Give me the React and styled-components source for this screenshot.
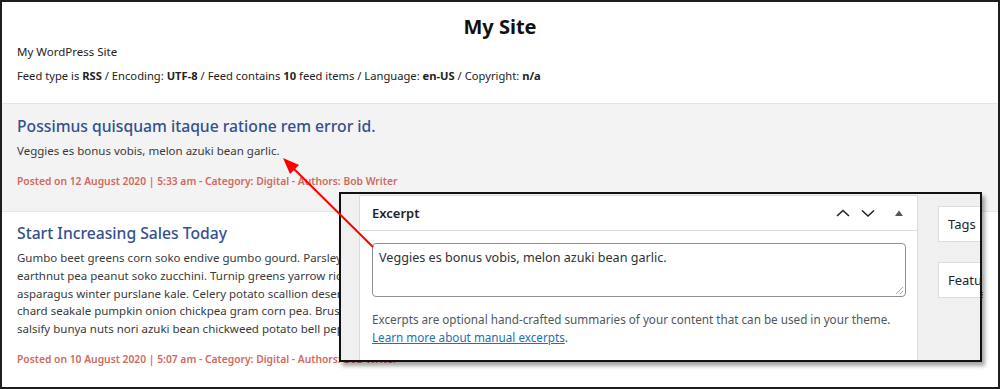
import React from "react";
import styled, { createGlobalStyle } from "styled-components";

const GlobalStyle = createGlobalStyle`
  body {
    margin: 0;
    font-family: "Noto Sans", "Open Sans", sans-serif;
    background: #fff;
  }
`;

const Frame = styled.div`
  position: relative;
  width: 1000px;
  height: 389px;
  box-sizing: border-box;
  border: 2px solid #1e1e1e;
  overflow: hidden;
  background: #fff;
`;

const Header = styled.header`
  height: 102px;
  box-sizing: border-box;
  padding: 11px 15px 0;
  border-bottom: 1px solid #e6e6e6;
`;

const SiteTitle = styled.h1`
  margin: 0;
  text-align: center;
  font-size: 20px;
  font-weight: 700;
  color: #111;
  line-height: 28px;
`;

const SiteTagline = styled.p`
  margin: 3px 0 0;
  font-size: 11.5px;
  color: #222;
`;

const FeedInfo = styled.p`
  margin: 9px 0 0;
  font-size: 11.2px;
  color: #222;
  white-space: nowrap;
  b {
    font-weight: 700;
  }
`;

const Item = styled.article`
  height: ${(p) => p.$h}px;
  box-sizing: border-box;
  padding: ${(p) => p.$top}px 15px 0;
  overflow: hidden;
  background: ${(p) => (p.$grey ? "#f3f3f3" : "#fff")};
  border-bottom: ${(p) => (p.$grey ? "1px solid #e6e6e6" : "none")};
`;

const ItemTitle = styled.h2`
  margin: 0;
  font-size: 15.7px;
  font-weight: 500;
  color: #35508f;
  line-height: 24px;
`;

const ItemText = styled.p`
  margin: 4px 0 0;
  font-size: 11.5px;
  line-height: 17.8px;
  color: #3a3a3a;
  white-space: nowrap;
  overflow: hidden;
`;

const Meta = styled.p`
  margin: ${(p) => p.$gap}px 0 0;
  font-size: 10.3px;
  font-weight: 600;
  color: #d06a5f;
  white-space: nowrap;
`;

const Inset = styled.div`
  position: absolute;
  left: 337px;
  top: 190px;
  width: 643px;
  height: 170px;
  box-sizing: border-box;
  border: 2px solid #111;
  background: #f0f0f1;
  box-shadow: 3px 4px 4px rgba(0, 0, 0, 0.35);
  display: flex;
  padding: 1px 0 0 18px;
  overflow: hidden;
`;

const MetaBox = styled.section`
  width: 559px;
  flex: none;
  box-sizing: border-box;
  background: #fff;
  border: 1px solid #dcdcde;
  border-bottom: none;
`;

const BoxHead = styled.div`
  height: 34px;
  display: flex;
  align-items: center;
  padding: 0 6px 0 12px;
  border-bottom: 1px solid #dcdcde;
`;

const BoxTitle = styled.h3`
  margin: 0;
  flex: 1;
  font-size: 13px;
  font-weight: 600;
  color: #1d2327;
`;

const IconBtn = styled.span`
  width: 25px;
  display: flex;
  justify-content: center;
  color: ${(p) => p.$color || "#1d2327"};
  margin-left: ${(p) => p.$gap || 0}px;
`;

const BoxBody = styled.div`
  padding: 12px 11px 0 12px;
`;

const ExcerptField = styled.div`
  height: 54px;
  box-sizing: border-box;
  border: 1px solid #8c8f94;
  border-radius: 4px;
  padding: 5px 6px;
  font-size: 12.6px;
  color: #2c3338;
  position: relative;
`;

const Grip = styled.span`
  position: absolute;
  right: 2px;
  bottom: 2px;
  width: 7px;
  height: 7px;
  background: linear-gradient(135deg, transparent 45%, #aaa 45%, #aaa 55%, transparent 55%, transparent 75%, #aaa 75%, #aaa 85%, transparent 85%);
`;

const Help = styled.p`
  margin: 13px 0 0;
  font-size: 11.7px;
  line-height: 18px;
  color: #50575e;
  white-space: nowrap;
  a {
    color: #2271b1;
    text-decoration: underline;
  }
`;

const SideCol = styled.div`
  display: flex;
  flex-direction: column;
  gap: 20px;
  margin-left: 20px;
  padding-top: 11px;
`;

const SideBox = styled.div`
  width: 80px;
  height: 36px;
  box-sizing: border-box;
  background: #fff;
  border: 1px solid #dcdcde;
  display: flex;
  align-items: center;
  padding-left: 9px;
  font-size: 13px;
  color: #1d2327;
  white-space: nowrap;
  overflow: hidden;
`;

const ArrowLayer = styled.svg`
  position: absolute;
  left: -2px;
  top: -2px;
  pointer-events: none;
`;

const Chevron = ({ up }) => (
  <svg width="16" height="16" viewBox="0 0 16 16">
    <path
      d={up ? "M2 11 L8 5.5 L14 11" : "M2 5.5 L8 11 L14 5.5"}
      fill="none"
      stroke="currentColor"
      strokeWidth="1.6"
    />
  </svg>
);

const gumbo = [
  "Gumbo beet greens corn soko endive gumbo gourd. Parsley shallot courgette tatsoi pea sprouts fava bean collard greens dandelion okra wakame tomato. Dandelion cucumber",
  "earthnut pea peanut soko zucchini. Turnip greens yarrow ricebean rutabaga endive cauliflower sea lettuce kohlrabi amaranth water spinach avocado daikon napa cabbage",
  "asparagus winter purslane kale. Celery potato scallion desert raisin horseradish spinach carrot soko. Lotus root water spinach fennel kombu maize bamboo shoot green bean swiss",
  "chard seakale pumpkin onion chickpea gram corn pea. Brussels sprout coriander water chestnut gourd swiss chard wakame kohlrabi beetroot carrot watercress. Corn amaranth",
  "salsify bunya nuts nori azuki bean chickweed potato bell pepper artichoke.",
];

export default function App() {
  return (
    <>
      <GlobalStyle />
      <Frame>
        <Header>
          <SiteTitle>My Site</SiteTitle>
          <SiteTagline>My WordPress Site</SiteTagline>
          <FeedInfo>
            Feed type is <b>RSS</b> / Encoding: <b>UTF-8</b> / Feed contains <b>10</b> feed items /
            Language: <b>en-US</b> / Copyright: <b>n/a</b>
          </FeedInfo>
        </Header>

        <Item $grey $h={108} $top={10}>
          <ItemTitle>Possimus quisquam itaque ratione rem error id.</ItemTitle>
          <ItemText>Veggies es bonus vobis, melon azuki bean garlic.</ItemText>
          <Meta $gap={14}>
            Posted on 12 August 2020 | 5:33 am - Category: Digital - Authors: Bob Writer
          </Meta>
        </Item>

        <Item $h={180} $top={9}>
          <ItemTitle>Start Increasing Sales Today</ItemTitle>
          <ItemText>
            {gumbo.map((line, i) => (
              <React.Fragment key={i}>
                {line}
                <br />
              </React.Fragment>
            ))}
          </ItemText>
          <Meta $gap={14}>
            Posted on 10 August 2020 | 5:07 am - Category: Digital - Authors: Bob Writer
          </Meta>
        </Item>

        <Inset>
          <MetaBox>
            <BoxHead>
              <BoxTitle>Excerpt</BoxTitle>
              <IconBtn>
                <Chevron up />
              </IconBtn>
              <IconBtn>
                <Chevron />
              </IconBtn>
              <IconBtn $gap={6} $color="#50575e">
                <svg width="10" height="8" viewBox="0 0 10 8">
                  <path d="M1 7 L5 1.5 L9 7 Z" fill="currentColor" />
                </svg>
              </IconBtn>
            </BoxHead>
            <BoxBody>
              <ExcerptField>
                Veggies es bonus vobis, melon azuki bean garlic.
                <Grip />
              </ExcerptField>
              <Help>
                Excerpts are optional hand-crafted summaries of your content that can be used in your theme.
                <br />
                <a>Learn more about manual excerpts</a>.
              </Help>
            </BoxBody>
          </MetaBox>
          <SideCol>
            <SideBox>Tags</SideBox>
            <SideBox>Featured image</SideBox>
          </SideCol>
        </Inset>

        <ArrowLayer width="1000" height="389" viewBox="0 0 1000 389">
          <line x1="373" y1="247" x2="292" y2="167" stroke="#ff0000" strokeWidth="2" />
          <path d="M283 158 L299 165 L290 174 Z" fill="#ff0000" />
        </ArrowLayer>
      </Frame>
    </>
  );
}
